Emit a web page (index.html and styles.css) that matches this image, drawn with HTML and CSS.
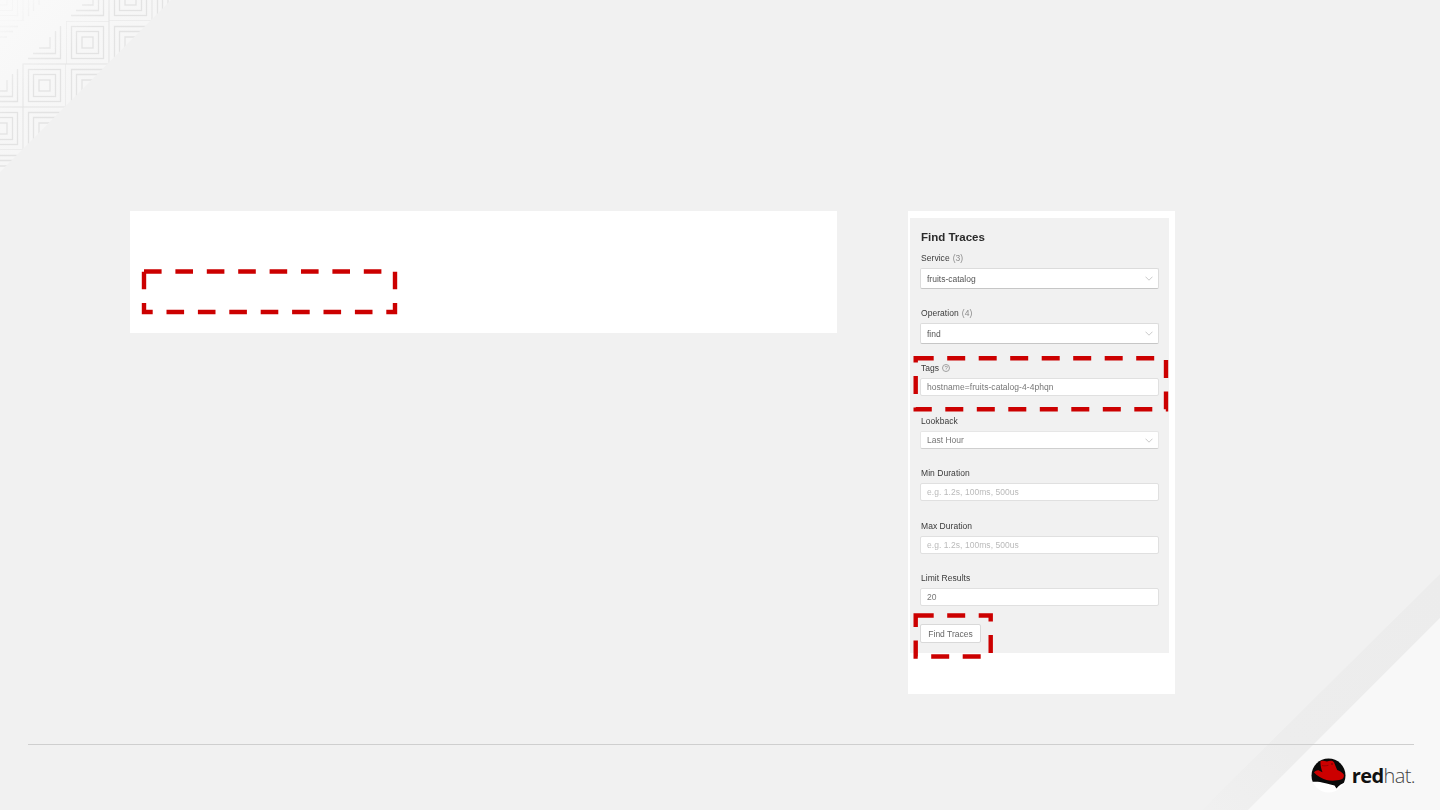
FILE: index.html
```html
<!DOCTYPE html>
<html lang="en">
<head>
<meta charset="utf-8">
<title>Find Traces</title>
<link rel="stylesheet" href="styles.css">
</head>
<body>
<div class="slide">
  <svg class="decor" width="1440" height="810" viewBox="0 0 1440 810" aria-hidden="true">
    <defs>
      <linearGradient id="cornerFill" gradientUnits="userSpaceOnUse" x1="0" y1="0" x2="85" y2="85">
        <stop offset="0" stop-color="#fafafa"/>
        <stop offset="1" stop-color="#f6f6f6"/>
      </linearGradient>
      <linearGradient id="patternFade" gradientUnits="userSpaceOnUse" x1="15" y1="15" x2="60" y2="60">
        <stop offset="0" stop-color="#222"/>
        <stop offset="1" stop-color="#fff"/>
      </linearGradient>
      <linearGradient id="band" gradientUnits="userSpaceOnUse" x1="1440" y1="574" x2="1210" y2="810">
        <stop offset="0" stop-color="#ececec"/>
        <stop offset="0.7" stop-color="#ededed"/>
        <stop offset="1" stop-color="#f0f0f0"/>
      </linearGradient>
      <mask id="patternMask" maskUnits="userSpaceOnUse" x="0" y="0" width="200" height="200">
        <rect width="200" height="200" fill="url(#patternFade)"/>
      </mask>
      <clipPath id="cornerClip"><polygon points="0,0 171,0 0,172"/></clipPath>
      <g id="full" fill="none" stroke="#e3e3e3" stroke-width="1.3">
        <rect x="0" y="0" width="43" height="43" stroke-width="1"/>
        <rect x="5.5" y="5.5" width="32" height="32"/>
        <rect x="10.5" y="10.5" width="22" height="22"/>
        <rect x="16" y="16" width="11" height="11"/>
      </g>
      <g id="tl" fill="none" stroke="#e3e3e3" stroke-width="1.3">
        <path d="M5.5 38V5.5H38"/>
        <path d="M10.5 33V10.5H33"/>
        <path d="M16 27V16H27"/>
      </g>
      <g id="br" fill="none" stroke="#e3e3e3" stroke-width="1.3">
        <path d="M37.5 5V37.5H5"/>
        <path d="M32.5 10V32.5H10"/>
        <path d="M27 16V27H16"/>
      </g>
      <pattern id="tiles" patternUnits="userSpaceOnUse" x="66" y="21" width="129" height="129">
        <use href="#full" x="0" y="0"/><use href="#tl" x="43" y="0"/><use href="#br" x="86" y="0"/>
        <use href="#tl" x="0" y="43"/><use href="#br" x="43" y="43"/><use href="#full" x="86" y="43"/>
        <use href="#br" x="0" y="86"/><use href="#full" x="43" y="86"/><use href="#tl" x="86" y="86"/>
      </pattern>
    </defs>
    <polygon points="0,0 171,0 0,172" fill="url(#cornerFill)"/>
    <g clip-path="url(#cornerClip)">
      <rect width="200" height="200" fill="url(#tiles)" mask="url(#patternMask)"/>
    </g>
    <polygon points="1440,574 1440,618 1248,810 1202,810" fill="url(#band)"/>
    <polygon points="1440,618 1440,810 1248,810" fill="#f8f8f8"/>
  </svg>

  <main class="content">
    <section class="card-wide"></section>
    <section class="card-tall">
      <div class="panel">
        <h2 class="panel-title">Find Traces</h2>
        <div class="field">
          <label class="field-label">Service <span class="count">(3)</span></label>
          <div class="select select-large">
            <span>fruits-catalog</span>
            <svg class="chevron" width="8" height="5" viewBox="0 0 8 5"><path d="M.5.7 4 4.2 7.5.7"/></svg>
          </div>
        </div>
        <div class="field">
          <label class="field-label">Operation <span class="count">(4)</span></label>
          <div class="select select-large">
            <span>find</span>
            <svg class="chevron" width="8" height="5" viewBox="0 0 8 5"><path d="M.5.7 4 4.2 7.5.7"/></svg>
          </div>
        </div>
        <div class="field field-loose">
          <label class="field-label">Tags <span class="help">?</span></label>
          <input class="text-input" type="text" value="hostname=fruits-catalog-4-4phqn">
        </div>
        <div class="field">
          <label class="field-label">Lookback</label>
          <div class="select select-small">
            <span>Last Hour</span>
            <svg class="chevron" width="8" height="5" viewBox="0 0 8 5"><path d="M.5.7 4 4.2 7.5.7"/></svg>
          </div>
        </div>
        <div class="field field-loose">
          <label class="field-label">Min Duration</label>
          <input class="text-input" type="text" placeholder="e.g. 1.2s, 100ms, 500us">
        </div>
        <div class="field">
          <label class="field-label">Max Duration</label>
          <input class="text-input" type="text" placeholder="e.g. 1.2s, 100ms, 500us">
        </div>
        <div class="field">
          <label class="field-label">Limit Results</label>
          <input class="text-input" type="text" value="20">
        </div>
        <button class="find-button" type="button">Find Traces</button>
      </div>
    </section>
  </main>

  <div class="rule"></div>

  <footer class="footer">
    <div class="logo">
      <svg class="logo-mark" width="35" height="35" viewBox="0 0 35 35" aria-hidden="true">
        <defs><clipPath id="logoClip"><circle cx="17.5" cy="17.5" r="17"/></clipPath></defs>
        <circle cx="17.5" cy="17.5" r="17" fill="#ffffff"/>
        <g clip-path="url(#logoClip)">
          <path d="M0 0H35V24C31 25.5 28 27 25.5 30.5L23.5 27.5C18 26 13 25 9 24C6 23.5 3 23.5 0 24Z" fill="#0a0a0a"/>
        </g>
        <path d="M9.5 3.2C11.5 2.2 14 3 16 3.4C18.5 2.4 21.8 2.2 23 4.3C24.2 7 25 9.6 26.2 12C28.6 13 31.4 14.4 32.6 16.2C33.4 18.4 32.6 20.8 30 21.6C26 22.8 20 23.4 15.5 22C11 20.6 6.2 18.2 3 14.6C3.6 13 5.6 12 7.6 12.2C8.6 12.8 10 13.6 11.5 14.2C10.2 11 9.2 7 9.5 3.2Z" fill="#cc0000"/>
        <path d="M11 7.5c2 .6 4 .4 6.5-.3" fill="none" stroke="#8a0000" stroke-width=".8"/>
        <circle cx="21" cy="6" r=".7" fill="#400"/>
      </svg>
      <span class="wordmark"><span class="wm-red">red</span><span class="wm-hat">hat.</span></span>
    </div>
  </footer>

  <svg class="annotations" width="1440" height="810" viewBox="0 0 1440 810" aria-hidden="true">
    <rect class="dash dash-wide" x="144" y="271.5" width="251" height="40.5"/>
    <rect class="dash" x="915.7" y="358.3" width="250.3" height="51"/>
    <rect class="dash" x="915.7" y="615.5" width="75" height="41"/>
  </svg>
</div>
</body>
</html>
```

FILE: styles.css
```css
* { box-sizing: border-box; }

html, body {
  margin: 0;
  padding: 0;
  background: #f1f1f1;
}

.slide {
  position: relative;
  width: 1440px;
  height: 810px;
  overflow: hidden;
  background: #f1f1f1;
  font-family: "Liberation Sans", Arial, sans-serif;
}

.decor, .annotations {
  position: absolute;
  top: 0;
  left: 0;
}

.dash {
  fill: none;
  stroke: #cc0000;
  stroke-width: 4.4;
  stroke-dasharray: 18 13.5;
}

.dash-wide {
  stroke-dasharray: 17.6 13.8;
}

.content {
  position: relative;
  display: flex;
  align-items: flex-start;
  height: 744px;
  padding: 211px 0 0 130px;
}

.card-wide {
  width: 707px;
  height: 122px;
  background: #fff;
}

.card-tall {
  width: 267px;
  height: 483px;
  margin-left: 71px;
  padding: 7px 6px 0 2px;
  background: #fff;
}

.panel {
  display: flex;
  flex-direction: column;
  height: 435px;
  padding: 12px 10px 0 10px;
  background: #f1f1f1;
  filter: blur(0.35px);
}

.panel-title {
  margin: 0 0 8px;
  padding-left: 1px;
  font-size: 11.5px;
  line-height: 14px;
  font-weight: 700;
  color: #2b2b2b;
}

.field {
  display: flex;
  flex-direction: column;
  gap: 4px;
  margin-bottom: 18px;
}

.field-loose { margin-bottom: 19px; }

.field-label {
  display: flex;
  align-items: center;
  gap: 2px;
  height: 12px;
  padding-left: 1px;
  font-size: 8.5px;
  line-height: 12px;
  letter-spacing: 0.05px;
  color: #3a3a3a;
}

.count { color: #8a8a8a; margin-left: 1px; }

.help {
  display: inline-flex;
  align-items: center;
  justify-content: center;
  width: 8px;
  height: 8px;
  margin-left: 1px;
  border: 1px solid #a0a0a0;
  border-radius: 50%;
  font-size: 6px;
  line-height: 6px;
  color: #8a8a8a;
}

.select {
  display: flex;
  align-items: center;
  justify-content: space-between;
  width: 239px;
  padding: 0 5px 0 6px;
  background: #fff;
  border: 1px solid #dcdcdc;
  border-bottom-color: #c6c6c6;
  border-radius: 2px;
  font-size: 8.5px;
  color: #555;
}

.select-large { height: 21px; }

.select-small {
  height: 18px;
  border-color: #e6e6e6;
  border-bottom-color: #cfcfcf;
  color: #777;
}

.chevron path {
  fill: none;
  stroke: #bdbdbd;
  stroke-width: 0.8;
}

.text-input {
  display: block;
  width: 239px;
  height: 18px;
  padding: 0 6px;
  background: #fff;
  border: 1px solid #e0e0e0;
  border-radius: 2px;
  outline: none;
  font-family: "Liberation Sans", Arial, sans-serif;
  font-size: 8.5px;
  letter-spacing: 0.05px;
  color: #777;
}

.text-input::placeholder {
  color: #bababa;
  opacity: 1;
}

.find-button {
  align-self: flex-start;
  width: 61px;
  height: 19px;
  padding: 0;
  background: #fff;
  border: 1px solid #d9d9d9;
  border-radius: 2px;
  font-family: "Liberation Sans", Arial, sans-serif;
  font-size: 8.5px;
  color: #666;
}

.rule {
  position: relative;
  height: 1px;
  margin: 0 26px 0 28px;
  background: #cfcfcf;
}

.footer {
  position: relative;
  display: flex;
  justify-content: flex-end;
  padding: 13px 25px 0 0;
}

.logo {
  display: flex;
  align-items: center;
  gap: 6px;
}

.wordmark {
  font-family: "Open Sans", "Noto Sans", sans-serif;
  font-size: 20px;
  line-height: 24px;
  letter-spacing: -0.6px;
  color: #111;
}

.wm-red { font-weight: 700; }
.wm-hat { font-weight: 300; color: #444; }
```
